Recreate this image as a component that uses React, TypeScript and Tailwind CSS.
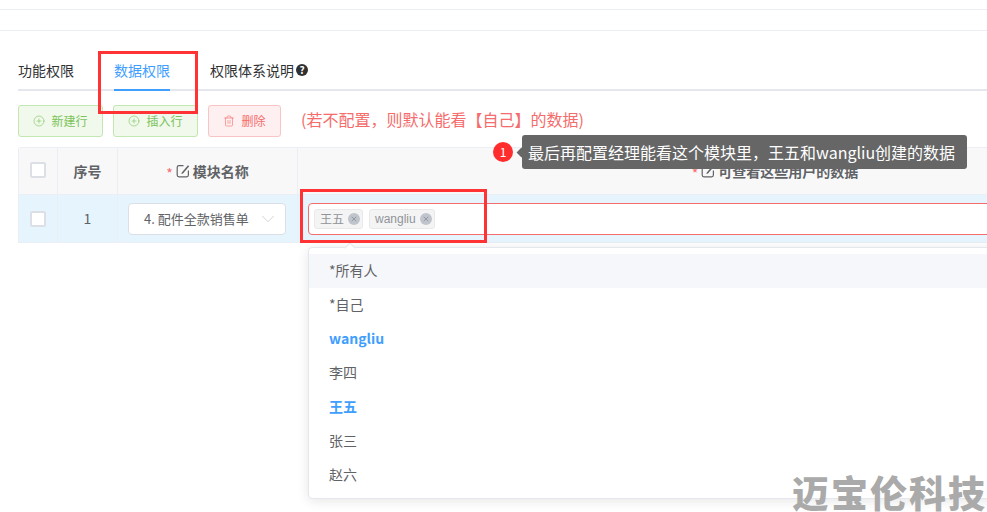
import { ChevronDown, CirclePlus, Trash2, X } from "lucide-react";

function EditIcon() {
  return (
    <svg width="14" height="14" viewBox="0 0 14 14" fill="none" className="shrink-0 text-[#606266]">
      <path d="M7.5 1.6H3A1.8 1.8 0 0 0 1.2 3.4V11A1.8 1.8 0 0 0 3 12.8h7.6a1.8 1.8 0 0 0 1.8-1.8V6.4" stroke="currentColor" strokeWidth="1.2" />
      <path d="M5.8 8.4L12 1.2l1.2 1.1L7 9.4l-1.6.5z" fill="currentColor" />
    </svg>
  );
}

function ActionButton({ label, tone, icon }: { label: string; tone: "green" | "red"; icon: "plus" | "trash" }) {
  const cls =
    tone === "green"
      ? "w-[85px] border-[#c2e7b0] bg-[#f0f9eb] text-[#7cc35a]"
      : "w-[73px] border-[#fbc4c4] bg-[#fef0f0] text-[#f56c6c]";
  return (
    <div className={`flex h-[32px] items-center justify-center gap-[6px] rounded-[3px] border text-[12px] ${cls}`}>
      {icon === "plus" ? <CirclePlus size={12} strokeWidth={1.2} /> : <Trash2 size={12} strokeWidth={1.2} />}
      <span className="pb-[1px]">{label}</span>
    </div>
  );
}

function Tag({ label, latin }: { label: string; latin?: boolean }) {
  return (
    <div className="flex h-[20px] items-center gap-[4px] rounded-[3px] border border-[#e9e9eb] bg-[#f4f4f5] pl-[5px] pr-[2px] text-[12px] text-[#909399]">
      <span className={latin ? "[font-family:'Liberation_Sans',sans-serif]" : ""}>{label}</span>
      <span className="flex h-[12px] w-[12px] items-center justify-center rounded-full bg-[#c0c4cc] text-[#6b6f78]">
        <X size={8} strokeWidth={1.5} />
      </span>
    </div>
  );
}

function Check() {
  return <div className="h-[16px] w-[16px] rounded-[2px] border-2 border-[#dcdfe6] bg-white" />;
}

const options = [
  { t: "*所有人", c: "bg-[#f5f7fa] text-[#606266]" },
  { t: "*自己", c: "text-[#606266]" },
  { t: "wangliu", c: "font-bold text-[#409eff]" },
  { t: "李四", c: "text-[#606266]" },
  { t: "王五", c: "font-bold text-[#409eff]" },
  { t: "张三", c: "text-[#606266]" },
  { t: "赵六", c: "text-[#606266]" },
];

export default function App() {
  return (
    <div className="relative h-[512px] w-[987px] overflow-hidden bg-white [font-family:'Noto_Sans_CJK_SC','Liberation_Sans',sans-serif]">
      <div className="mt-[9px] h-[22px] border-y border-[#ebeef5]" />

      <div className="mt-[20px] pl-[18px]">
        <div className="flex h-[40px] items-stretch border-b-2 border-[#e4e7ed] text-[14px] text-[#303133]">
          <div className="flex w-[56px] items-center">功能权限</div>
          <div className="relative ml-[40px] flex w-[56px] items-center text-[#409eff]">
            数据权限
            <div className="absolute bottom-[-2px] left-0 h-[2px] w-full bg-[#409eff]" />
          </div>
          <div className="ml-[40px] flex items-center">
            权限体系说明
            <span className="ml-[2px] flex h-[12px] w-[12px] items-center justify-center rounded-full bg-[#303133] text-[10px] font-bold leading-none text-white">?</span>
          </div>
        </div>

        <div className="mt-[14px] flex items-center">
          <ActionButton label="新建行" tone="green" icon="plus" />
          <div className="ml-[10px]"><ActionButton label="插入行" tone="green" icon="plus" /></div>
          <div className="ml-[10px]"><ActionButton label="删除" tone="red" icon="trash" /></div>
          <div className="ml-[20px] pb-[4px] text-[16px] text-[#f56c6c]">(若不配置，则默认能看【自己】的数据)</div>
        </div>

        <div className="mt-[10px] rounded-tl-[3px] border-l border-t border-[#ebeef5]">
          <div className="flex h-[47px] border-b border-[#ebeef5] bg-[#f8f8f9] text-[14px] font-bold text-[#606266]">
            <div className="flex w-[39px] shrink-0 items-center justify-center border-r border-[#ebeef5] pb-[2px]"><Check /></div>
            <div className="flex w-[60px] shrink-0 items-center justify-center border-r border-[#ebeef5]">序号</div>
            <div className="flex w-[180px] shrink-0 items-center justify-center gap-[3px] border-r border-[#ebeef5]">
              <span className="pt-[5px] font-normal text-[#f56c6c]">*</span>
              <EditIcon />
              <span>模块名称</span>
            </div>
            <div className="flex w-[954px] shrink-0 items-center justify-center gap-[3px]">
              <span className="pt-[5px] font-normal text-[#f56c6c]">*</span>
              <EditIcon />
              <span>可查看这些用户的数据</span>
            </div>
          </div>
          <div className="flex h-[48px] border-b border-[#ebeef5] bg-[#e6f5fd] text-[13px] text-[#606266]">
            <div className="flex w-[39px] shrink-0 items-center justify-center border-r border-[#ebeef5]"><Check /></div>
            <div className="flex w-[60px] shrink-0 items-center justify-center border-r border-[#ebeef5] text-[14px]">1</div>
            <div className="flex w-[180px] shrink-0 items-center border-r border-[#ebeef5] pl-[10px]">
              <div className="flex h-[32px] w-[158px] items-center justify-between rounded-[4px] border border-[#dcdfe6] bg-white pl-[15px] pr-[6px]">
                <span>4. 配件全款销售单</span>
                <ChevronDown size={22} strokeWidth={0.8} className="text-[#c0c4cc]" />
              </div>
            </div>
            <div className="flex w-[954px] shrink-0 items-center pl-[10px]">
              <div className="flex h-[32px] flex-1 items-center gap-[6px] rounded-[4px] border border-[#f56c6c] bg-white pl-[5px]">
                <Tag label="王五" />
                <Tag label="wangliu" latin />
              </div>
            </div>
          </div>
        </div>
      </div>

      {/* 下拉菜单 */}
      <div className="absolute left-[308px] top-[247px] w-[720px] rounded-[4px] border border-[#e4e7ed] bg-white py-[6px] text-[14px] shadow-[0_2px_12px_rgba(0,0,0,0.1)]">
        {options.map((o) => (
          <div key={o.t} className={`flex h-[34px] items-center px-[20px] pb-[2px] ${o.c}`}>{o.t}</div>
        ))}
      </div>
      <div className="absolute left-[346px] top-[244px] h-[8px] w-[8px] rotate-45 border-l border-t border-[#e4e7ed] bg-white" />

      {/* 红框标注 */}
      <div className="absolute left-[98px] top-[51px] h-[63px] w-[100px] border-[3px] border-[#ff3333]" />
      <div className="absolute left-[300px] top-[189px] h-[54px] w-[187px] border-[3px] border-[#ff3333]" />

      {/* 步骤提示 */}
      <div className="absolute left-[493px] top-[142px] flex h-[20px] w-[20px] items-center justify-center rounded-full bg-[#ff2d2d] text-[12px] text-white">1</div>
      <div className="absolute left-[518px] top-[149px] h-[7px] w-[7px] rotate-45 bg-[#666666]" />
      <div className="absolute left-[522px] top-[135px] flex h-[34px] items-center whitespace-nowrap rounded-[3px] bg-[#666666] pl-[6px] pr-[12px] text-[16px] text-white">
        最后再配置经理能看这个模块里，王五和wangliu创建的数据
      </div>

      {/* 水印 */}
      <div className="absolute left-[792px] top-[473px] whitespace-nowrap text-[37px] font-black leading-[38px] tracking-[2px] text-[#aaaaaa]">迈宝伦科技</div>
    </div>
  );
}
